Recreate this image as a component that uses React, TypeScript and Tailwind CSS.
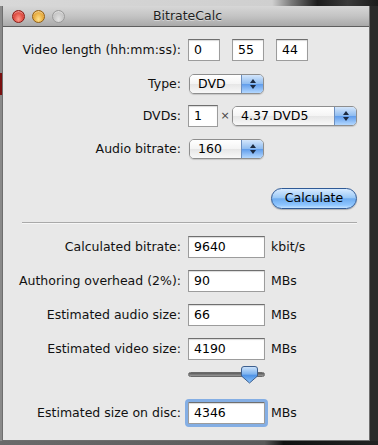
import React from "react";

const font = { fontFamily: '"DejaVu Sans", "Liberation Sans", sans-serif' };

function Field({ value, w, focus }: { value: string; w: string; focus?: boolean }) {
  return (
    <div
      className={`${w} h-[22px] bg-white border border-[#9c9c9c] border-t-[#6f6f6f] shadow-[inset_0_1px_1px_rgba(0,0,0,0.15)] pl-[5px] flex items-center text-[12.5px] text-black ${
        focus ? "outline-[3px] outline outline-[#84aee4] rounded-[1px]" : ""
      }`}
    >
      {value}
    </div>
  );
}

function Arrows() {
  return (
    <svg width="8" height="12" viewBox="0 0 8 12">
      <path d="M4 1 L7 5 L1 5 Z" fill="#1c2a40" />
      <path d="M4 11 L7 7 L1 7 Z" fill="#1c2a40" />
    </svg>
  );
}

function Popup({ label, w }: { label: string; w: string }) {
  return (
    <div
      className={`${w} h-[20px] flex rounded-[5px] border border-[#8e8e8e] overflow-hidden shadow-[0_1px_1px_rgba(0,0,0,0.15)]`}
    >
      <div className="flex-1 flex items-center pl-[8px] text-[12.5px] text-black bg-[linear-gradient(to_bottom,#ffffff_0%,#f4f4f4_50%,#e6e6e6_51%,#f8f8f8_100%)]">
        {label}
      </div>
      <div className="w-[22px] flex items-center justify-center border-l border-[#6c8fbf] bg-[linear-gradient(to_bottom,#d4e6fb_0%,#8dbbf0_50%,#5f9ceb_51%,#b4d8ff_100%)]">
        <Arrows />
      </div>
    </div>
  );
}

function Label({ children }: { children: React.ReactNode }) {
  return (
    <div className="w-[179px] text-right text-[12.5px] text-[#111] whitespace-nowrap pr-[1px]">{children}</div>
  );
}

function ResultRow({ label, value, unit, focus, mt }: { label: string; value: string; unit: string; focus?: boolean; mt: string }) {
  return (
    <div className={`flex items-center ${mt}`}>
      <Label>{label}</Label>
      <div className="ml-[6px]">
        <Field value={value} w="w-[77px]" focus={focus} />
      </div>
      <div className="ml-[6px] text-[12.5px] text-[#111]">{unit}</div>
    </div>
  );
}

function TrafficLight({ from, to, border }: { from: string; to: string; border: string }) {
  return (
    <div
      className={`w-[13px] h-[13px] rounded-full border ${border} ${from} ${to} bg-radial-[at_50%_75%] shadow-[inset_0_1px_1px_rgba(255,255,255,0.5)]`}
    />
  );
}

export default function App() {
  return (
    <div className="w-[378px] h-[445px] flex flex-col bg-[#3a3a3a] overflow-hidden" style={font}>
      <div className="h-[6px] bg-[linear-gradient(to_right,#d8d8d8_0%,#cfcfcf_72%,#7a7a7a_77%,#1b1b1b_84%,#3a3a3a_92%,#1b1b1b_100%)]" />
      <div className="flex flex-1">
        <div className="w-[2px] flex flex-col bg-[#8a8a8a]">
          <div className="h-[67px]" />
          <div className="h-[22px] bg-[#7a1010]" />
        </div>
        <div className="w-[368px] h-[435px] flex flex-col border border-[#6e6e6e] border-t-0">
          {/* title bar */}
          <div className="h-[21px] flex items-center relative bg-[linear-gradient(to_bottom,#d7d7d7_0%,#c4c4c4_50%,#a9a9a9_100%)] border-b border-[#5e5e5e]">
            <div className="flex items-center gap-[7px] pl-[9px]">
              <TrafficLight from="from-[#ff9a8a]" to="to-[#c8150e]" border="border-[#8a1a14]" />
              <TrafficLight from="from-[#ffe08a]" to="to-[#d88a0a]" border="border-[#946012]" />
              <TrafficLight from="from-[#e2e2e2]" to="to-[#b4b4b4]" border="border-[#9a9a9a]" />
            </div>
            <div className="absolute inset-0 flex items-center justify-center pl-[3px] text-[12.5px] text-[#1e1e1e] [text-shadow:0_1px_0_rgba(255,255,255,0.45)]">
              BitrateCalc
            </div>
          </div>

          {/* body */}
          <div className="flex-1 bg-[#e8e8e8] flex flex-col">
            <div className="flex items-center mt-[12px]">
              <Label>Video length (hh:mm:ss):</Label>
              <div className="ml-[6px] flex gap-[12px]">
                <Field value="0" w="w-[32px]" />
                <Field value="55" w="w-[32px]" />
                <Field value="44" w="w-[32px]" />
              </div>
            </div>

            <div className="flex items-center mt-[13px]">
              <Label>Type:</Label>
              <div className="ml-[7px]">
                <Popup label="DVD" w="w-[75px]" />
              </div>
            </div>

            <div className="flex items-center mt-[11px]">
              <Label>DVDs:</Label>
              <div className="ml-[6px]">
                <Field value="1" w="w-[30px]" />
              </div>
              <div className="w-[14px] text-center text-[11px] text-[#444]">×</div>
              <Popup label="4.37 DVD5" w="w-[125px]" />
            </div>

            <div className="flex items-center mt-[12px]">
              <Label>Audio bitrate:</Label>
              <div className="ml-[7px]">
                <Popup label="160" w="w-[75px]" />
              </div>
            </div>

            <div className="mt-[29px] ml-[268px] w-[86px] h-[21px] rounded-full border border-[#2f5a96] flex items-center justify-center text-[12.5px] text-black bg-[linear-gradient(to_bottom,#d8ebff_0%,#9ccaf7_45%,#6eacef_52%,#8fc6ff_85%,#c4e3ff_100%)] shadow-[0_1px_1px_rgba(0,0,0,0.25)]">
              Calculate
            </div>

            <div className="mt-[13px] ml-[19px] w-[335px] h-[1px] bg-[#a9a9a9] shadow-[0_1px_0_#f6f6f6]" />

            <ResultRow mt="mt-[13px]" label="Calculated bitrate:" value="9640" unit="kbit/s" />
            <ResultRow mt="mt-[12px]" label="Authoring overhead (2%):" value="90" unit="MBs" />
            <ResultRow mt="mt-[12px]" label="Estimated audio size:" value="66" unit="MBs" />
            <ResultRow mt="mt-[12px]" label="Estimated video size:" value="4190" unit="MBs" />

            <div className="mt-[6px] ml-[185px] w-[77px] h-[17px] relative flex items-center">
              <div className="w-full h-[5px] rounded-full bg-[linear-gradient(to_bottom,#5a5a5a,#9a9a9a)] border border-[#6a6a6a]" />
              <svg className="absolute left-[53px] top-0" width="17" height="18" viewBox="0 0 17 18">
                <defs>
                  <linearGradient id="knob" x1="0" y1="0" x2="0" y2="1">
                    <stop offset="0" stopColor="#cfe4fb" />
                    <stop offset="0.45" stopColor="#7fb4ef" />
                    <stop offset="0.55" stopColor="#4f93e6" />
                    <stop offset="1" stopColor="#8cc4fb" />
                  </linearGradient>
                </defs>
                <path
                  d="M3 0.5 H14 Q16.5 0.5 16.5 3 V10 L8.5 17 L0.5 10 V3 Q0.5 0.5 3 0.5 Z"
                  fill="url(#knob)"
                  stroke="#3d5f8e"
                  strokeWidth="1"
                />
              </svg>
            </div>

            <ResultRow mt="mt-[19px]" label="Estimated size on disc:" value="4346" unit="MBs" focus />
          </div>
        </div>
        <div className="flex-1 bg-[#2a2a2a]" />
      </div>
      <div className="h-[4px] bg-[linear-gradient(to_right,#6a6a6a_0%,#5a5a5a_70%,#111_75%,#222_100%)]" />
    </div>
  );
}
